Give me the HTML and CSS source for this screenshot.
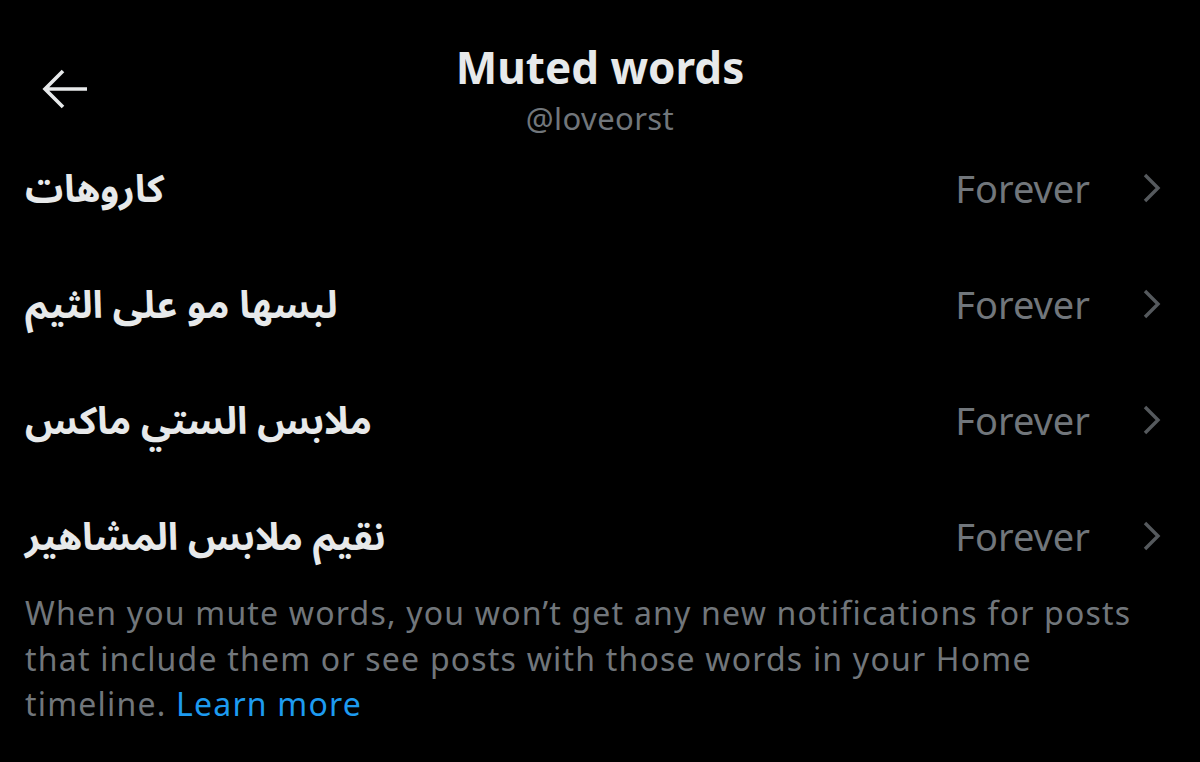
FILE: index.html
```html
<!DOCTYPE html>
<html lang="en">
<head>
<meta charset="utf-8">
<title>Muted words</title>
<link rel="stylesheet" href="styles.css">
</head>
<body>
<div class="page">
  <header class="header">
    <div class="back">
      <svg class="back-icon" viewBox="0 0 48 42" width="48" height="42" aria-hidden="true">
        <path d="M46 21H4M22 3L4 21l18 18" fill="none" stroke="#e7e9ea" stroke-width="3.6" stroke-linecap="butt" stroke-linejoin="miter"/>
      </svg>
    </div>
    <div class="titles">
      <div class="title">Muted words</div>
      <div class="handle">@loveorst</div>
    </div>
    <div></div>
  </header>
  <ul class="list">
    <li class="row"><span class="word" dir="rtl">كاروهات</span><span class="meta"><span class="dur">Forever</span><svg class="chev" viewBox="0 0 20 30" width="20" height="30" aria-hidden="true"><path d="M3 2l13 13L3 28" fill="none" stroke="#55595d" stroke-width="3.4"/></svg></span></li>
    <li class="row"><span class="word" dir="rtl">لبسها مو على الثيم</span><span class="meta"><span class="dur">Forever</span><svg class="chev" viewBox="0 0 20 30" width="20" height="30" aria-hidden="true"><path d="M3 2l13 13L3 28" fill="none" stroke="#55595d" stroke-width="3.4"/></svg></span></li>
    <li class="row"><span class="word" dir="rtl">ملابس الستي ماكس</span><span class="meta"><span class="dur">Forever</span><svg class="chev" viewBox="0 0 20 30" width="20" height="30" aria-hidden="true"><path d="M3 2l13 13L3 28" fill="none" stroke="#55595d" stroke-width="3.4"/></svg></span></li>
    <li class="row"><span class="word" dir="rtl">نقيم ملابس المشاهير</span><span class="meta"><span class="dur">Forever</span><svg class="chev" viewBox="0 0 20 30" width="20" height="30" aria-hidden="true"><path d="M3 2l13 13L3 28" fill="none" stroke="#55595d" stroke-width="3.4"/></svg></span></li>
  </ul>
  <p class="desc">When you mute words, you won’t get any new notifications for posts that include them or see posts with those words in your Home timeline. <a class="link" href="#">Learn more</a></p>
</div>
</body>
</html>
```

FILE: styles.css
```css
html, body {
  margin: 0;
  padding: 0;
  background: #000;
}

body {
  width: 1200px;
  height: 762px;
  overflow: hidden;
  font-family: "Noto Sans", "DejaVu Sans", sans-serif;
  color: #e7e9ea;
}

.page {
  display: flex;
  flex-direction: column;
}

.header {
  display: grid;
  grid-template-columns: 1fr auto 1fr;
  align-items: start;
  padding: 41px 0 2px;
}

.back {
  padding: 27px 0 0 41px;
  display: flex;
}

.back-icon {
  display: block;
}

.titles {
  display: flex;
  flex-direction: column;
  align-items: center;
  gap: 7px;
}

.title {
  font-family: "Noto Sans", sans-serif;
  font-weight: 700;
  font-size: 44px;
  line-height: 52px;
  color: #e7e9ea;
}

.handle {
  font-size: 31px;
  line-height: 36px;
  letter-spacing: 0.4px;
  color: #71767b;
}

.list {
  list-style: none;
  margin: 0;
  padding: 0;
  display: flex;
  flex-direction: column;
  gap: 12px;
}

.row {
  height: 104px;
  display: flex;
  align-items: center;
  justify-content: space-between;
  padding: 0 38px 0 25px;
}

.word {
  font-family: "Noto Sans Arabic", "DejaVu Sans", sans-serif;
  font-weight: 700;
  font-size: 38px;
  color: #e7e9ea;
}

.meta {
  display: flex;
  align-items: center;
  gap: 52px;
}

.dur {
  font-size: 38px;
  line-height: 46px;
  margin-top: -4px;
  color: #71767b;
}

.chev {
  display: block;
  margin-top: -4px;
}

.desc {
  margin: 0;
  padding: 0 55px 0 25px;
  font-size: 32px;
  line-height: 45.5px;
  letter-spacing: 1.2px;
  color: #71767b;
}

.link {
  color: #1d9bf0;
  text-decoration: none;
}
```
